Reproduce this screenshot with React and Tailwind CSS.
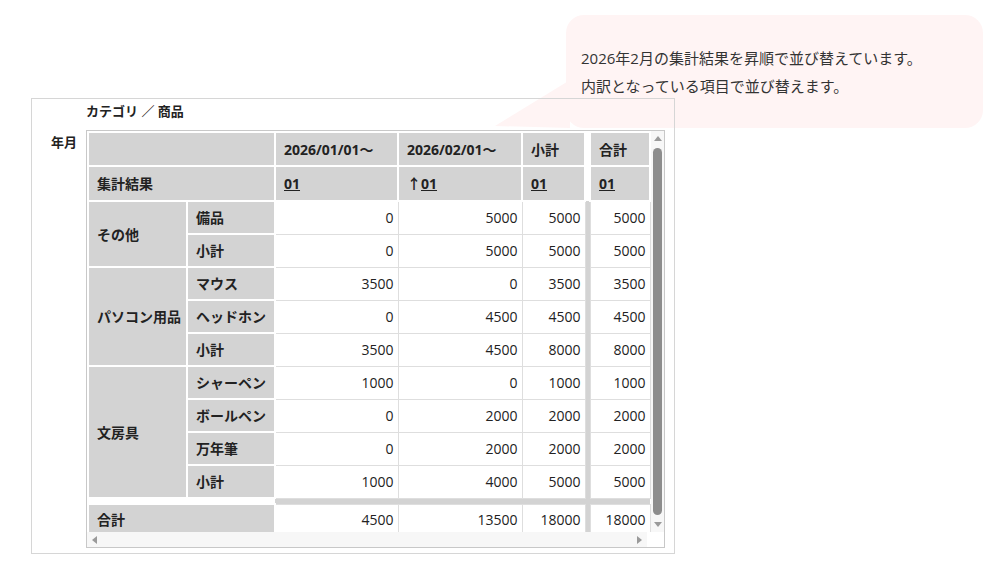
const font = { fontFamily: '"Open Sans", "Noto Sans CJK JP", sans-serif' };

const rows = [
  { cat: "その他", span: 2, item: "備品", v: [0, 5000, 5000, 5000] },
  { item: "小計", v: [0, 5000, 5000, 5000] },
  { cat: "パソコン用品", span: 3, item: "マウス", v: [3500, 0, 3500, 3500] },
  { item: "ヘッドホン", v: [0, 4500, 4500, 4500] },
  { item: "小計", v: [3500, 4500, 8000, 8000] },
  { cat: "文房具", span: 4, item: "シャーペン", v: [1000, 0, 1000, 1000] },
  { item: "ボールペン", v: [0, 2000, 2000, 2000] },
  { item: "万年筆", v: [0, 2000, 2000, 2000] },
  { item: "小計", v: [1000, 4000, 5000, 5000] },
];

const hd = "bg-[#d3d3d3] border-2 border-white font-bold text-left px-2 whitespace-nowrap";
const dc = "bg-white border border-[#dedede] text-right px-1";
const gap = "w-[5px] p-0 bg-[#d3d3d3]";

function Arrow({ d }) {
  const p = {
    up: "M1 7 L5 2 L9 7 Z",
    down: "M1 3 L5 8 L9 3 Z",
    left: "M7 1 L2 5 L7 9 Z",
    right: "M3 1 L8 5 L3 9 Z",
  }[d];
  return (
    <svg width="10" height="10" viewBox="0 0 10 10">
      <path d={p} fill="#9a9a9a" />
    </svg>
  );
}

export default function App() {
  return (
    <div className="relative w-[992px] h-[567px] bg-white text-[14px] text-[#222]" style={font}>
      {/* callout */}
      <div className="absolute left-[566px] top-[15px] w-[417px] h-[113px] rounded-[18px] bg-[#fff4f4] px-[15px] pt-[29px] text-[15px] leading-[28px] text-[#333]">
        <p>2026年2月の集計結果を昇順で並び替えています。</p>
        <p>内訳となっている項目で並び替えます。</p>
      </div>
      <svg className="absolute left-[490px] top-[70px]" width="90" height="60">
        <path d="M5 56 L80 10 L80 58 Z" fill="#fff4f4" />
      </svg>

      <div className="absolute left-[31px] top-[98px] w-[644px] h-[456px] border border-[#d6d6d6] flex">
        <div className="w-[54px] pt-[34px] pl-[19px] font-bold text-[13px]">年月</div>
        <div className="flex flex-col">
          <div className="h-[31px] pt-[3px] font-bold text-[13px]">カテゴリ ／ 商品</div>
          <div className="w-[579px] h-[418px] border border-[#c8c8c8] flex flex-col">
            <div className="flex h-[401px] overflow-hidden">
              <table className="border-collapse w-[562px] table-fixed">
                <colgroup>
                  <col className="w-[99px]" />
                  <col className="w-[88px]" />
                  <col className="w-[123px]" />
                  <col className="w-[124px]" />
                  <col className="w-[63px]" />
                  <col className="w-[5px]" />
                  <col className="w-[60px]" />
                </colgroup>
                <tbody>
                  <tr className="h-[34px]">
                    <td colSpan={2} className={hd}></td>
                    <td className={hd}>2026/01/01～</td>
                    <td className={hd}>2026/02/01～</td>
                    <td className={hd}>小計</td>
                    <td className="w-[5px] p-0 bg-white"></td>
                    <td className={hd}>合計</td>
                  </tr>
                  <tr className="h-[35px]">
                    <td colSpan={2} className={hd}>集計結果</td>
                    <td className={hd}><span className="underline">01</span></td>
                    <td className={hd}>↑<span className="underline">01</span></td>
                    <td className={hd}><span className="underline">01</span></td>
                    <td className="w-[5px] p-0 bg-white"></td>
                    <td className={hd}><span className="underline">01</span></td>
                  </tr>
                  {rows.map((r, i) => (
                    <tr key={i} className="h-[33px]">
                      {r.cat && (
                        <td rowSpan={r.span} className={hd}>{r.cat}</td>
                      )}
                      <td className={hd}>{r.item}</td>
                      <td className={dc}>{r.v[0]}</td>
                      <td className={dc}>{r.v[1]}</td>
                      <td className={dc}>{r.v[2]}</td>
                      <td className={gap}></td>
                      <td className={dc}>{r.v[3]}</td>
                    </tr>
                  ))}
                  <tr className="h-[6px]">
                    <td colSpan={2} className="p-0 bg-white"></td>
                    <td colSpan={5} className="p-0 bg-[#d3d3d3]"></td>
                  </tr>
                  <tr className="h-[30px]">
                    <td colSpan={2} className={hd}>合計</td>
                    <td className={dc}>4500</td>
                    <td className={dc}>13500</td>
                    <td className={dc}>18000</td>
                    <td className={gap}></td>
                    <td className={dc}>18000</td>
                  </tr>
                </tbody>
              </table>
              <div className="w-[17px] flex flex-col items-center py-[3px] bg-[#f7f7f7]">
                <Arrow d="up" />
                <div className="w-[9px] flex-1 my-[4px] rounded-full bg-[#8d8d8d]"></div>
                <Arrow d="down" />
              </div>
            </div>
            <div className="flex-1 flex items-center justify-between px-[3px] bg-[#f7f7f7] mr-[17px]">
              <Arrow d="left" />
              <Arrow d="right" />
            </div>
          </div>
        </div>
      </div>
    </div>
  );
}
